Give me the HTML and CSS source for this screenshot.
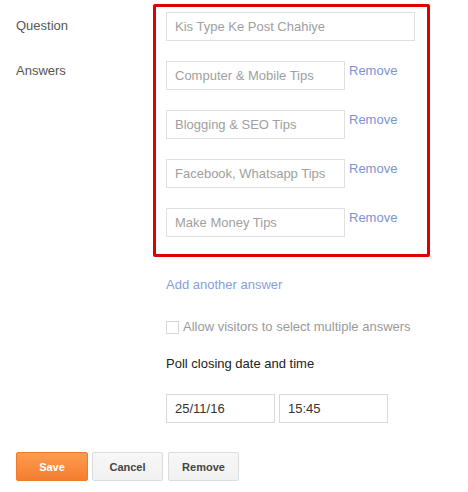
FILE: index.html
```html
<!DOCTYPE html>
<html>
<head>
<meta charset="utf-8">
<link rel="stylesheet" href="styles.css">
</head>
<body>
<div class="page">
  <div class="fields">
    <div class="labels">
      <div class="label label-q">Question</div>
      <div class="label label-a">Answers</div>
    </div>
    <div class="box">
      <input class="field question" type="text" placeholder="Kis Type Ke Post Chahiye">
      <div class="answers">
        <div class="answer"><input class="field ans" type="text" placeholder="Computer &amp; Mobile Tips"><a class="remove" href="#">Remove</a></div>
        <div class="answer"><input class="field ans" type="text" placeholder="Blogging &amp; SEO Tips"><a class="remove" href="#">Remove</a></div>
        <div class="answer"><input class="field ans" type="text" placeholder="Facebook, Whatsapp Tips"><a class="remove" href="#">Remove</a></div>
        <div class="answer"><input class="field ans" type="text" placeholder="Make Money Tips"><a class="remove" href="#">Remove</a></div>
      </div>
    </div>
  </div>
  <div class="more">
    <a class="add" href="#">Add another answer</a>
    <label class="multi"><span class="check"></span>Allow visitors to select multiple answers</label>
    <div class="closing">Poll closing date and time</div>
    <div class="dates">
      <input class="field date" type="text" value="25/11/16">
      <input class="field date" type="text" value="15:45">
    </div>
  </div>
  <div class="buttons">
    <button class="btn save">Save</button>
    <button class="btn cancel">Cancel</button>
    <button class="btn del">Remove</button>
  </div>
</div>
</body>
</html>
```
FILE: styles.css
```css
html, body {
  margin: 0;
  padding: 0;
  background: #fff;
}
body {
  font-family: "Liberation Sans", Arial, sans-serif;
  font-size: 13px;
  line-height: 16px;
  color: #222;
}
.page {
  padding: 4px 0 0 16px;
}
.fields {
  display: flex;
  align-items: flex-start;
}
.labels {
  width: 137px;
  display: flex;
  flex-direction: column;
}
.label {
  color: #555;
}
.label-q {
  margin-top: 14px;
}
.label-a {
  margin-top: 29px;
}
.box {
  border: 3px solid #e00000;
  border-radius: 2px;
  padding: 5px 12px 17px 10px;
  width: 249px;
  display: flex;
  flex-direction: column;
}
.field {
  box-sizing: border-box;
  height: 29px;
  border: 1px solid #e0e0e0;
  border-radius: 0;
  padding: 0 0 0 8px;
  margin: 0;
  font-family: "Liberation Sans", Arial, sans-serif;
  font-size: 13px;
  color: #333;
  background: #fff;
  outline: none;
}
.field::placeholder {
  color: #a0a0a0;
  opacity: 1;
}
.question {
  width: 249px;
}
.answers {
  margin-top: 20px;
  display: flex;
  flex-direction: column;
  gap: 20px;
}
.answer {
  display: flex;
  align-items: flex-start;
}
.ans {
  width: 179px;
}
.remove {
  margin-left: 4px;
  padding-top: 2px;
  color: #7b92d3;
  text-decoration: none;
}
.more {
  padding-left: 150px;
  display: flex;
  flex-direction: column;
  align-items: flex-start;
}
.add {
  margin-top: 20px;
  color: #86a0dc;
  text-decoration: none;
}
.multi {
  margin-top: 26px;
  display: flex;
  align-items: center;
  color: #9a9a9a;
}
.check {
  box-sizing: border-box;
  width: 13px;
  height: 13px;
  border: 1px solid #d6d6d6;
  margin-right: 4px;
  background: #fff;
}
.closing {
  margin-top: 21px;
  color: #222;
}
.dates {
  margin-top: 22px;
  display: flex;
  gap: 4px;
}
.date {
  width: 109px;
  border-color: #d9d9d9;
  color: #333;
}
.buttons {
  margin-top: 29px;
  display: flex;
  gap: 4px;
}
.btn {
  box-sizing: border-box;
  height: 29px;
  width: 71px;
  border: 1px solid #dcdcdc;
  border-radius: 2px;
  background: linear-gradient(#f7f7f7, #f1f1f1);
  color: #444;
  font-family: "Liberation Sans", Arial, sans-serif;
  font-size: 11px;
  font-weight: bold;
  padding: 0;
}
.save {
  width: 72px;
  background: linear-gradient(#fd9c50, #f57d2e);
  border-color: #f07a2c;
  color: #fff;
}
.del {
  margin-left: 1px;
}
```
